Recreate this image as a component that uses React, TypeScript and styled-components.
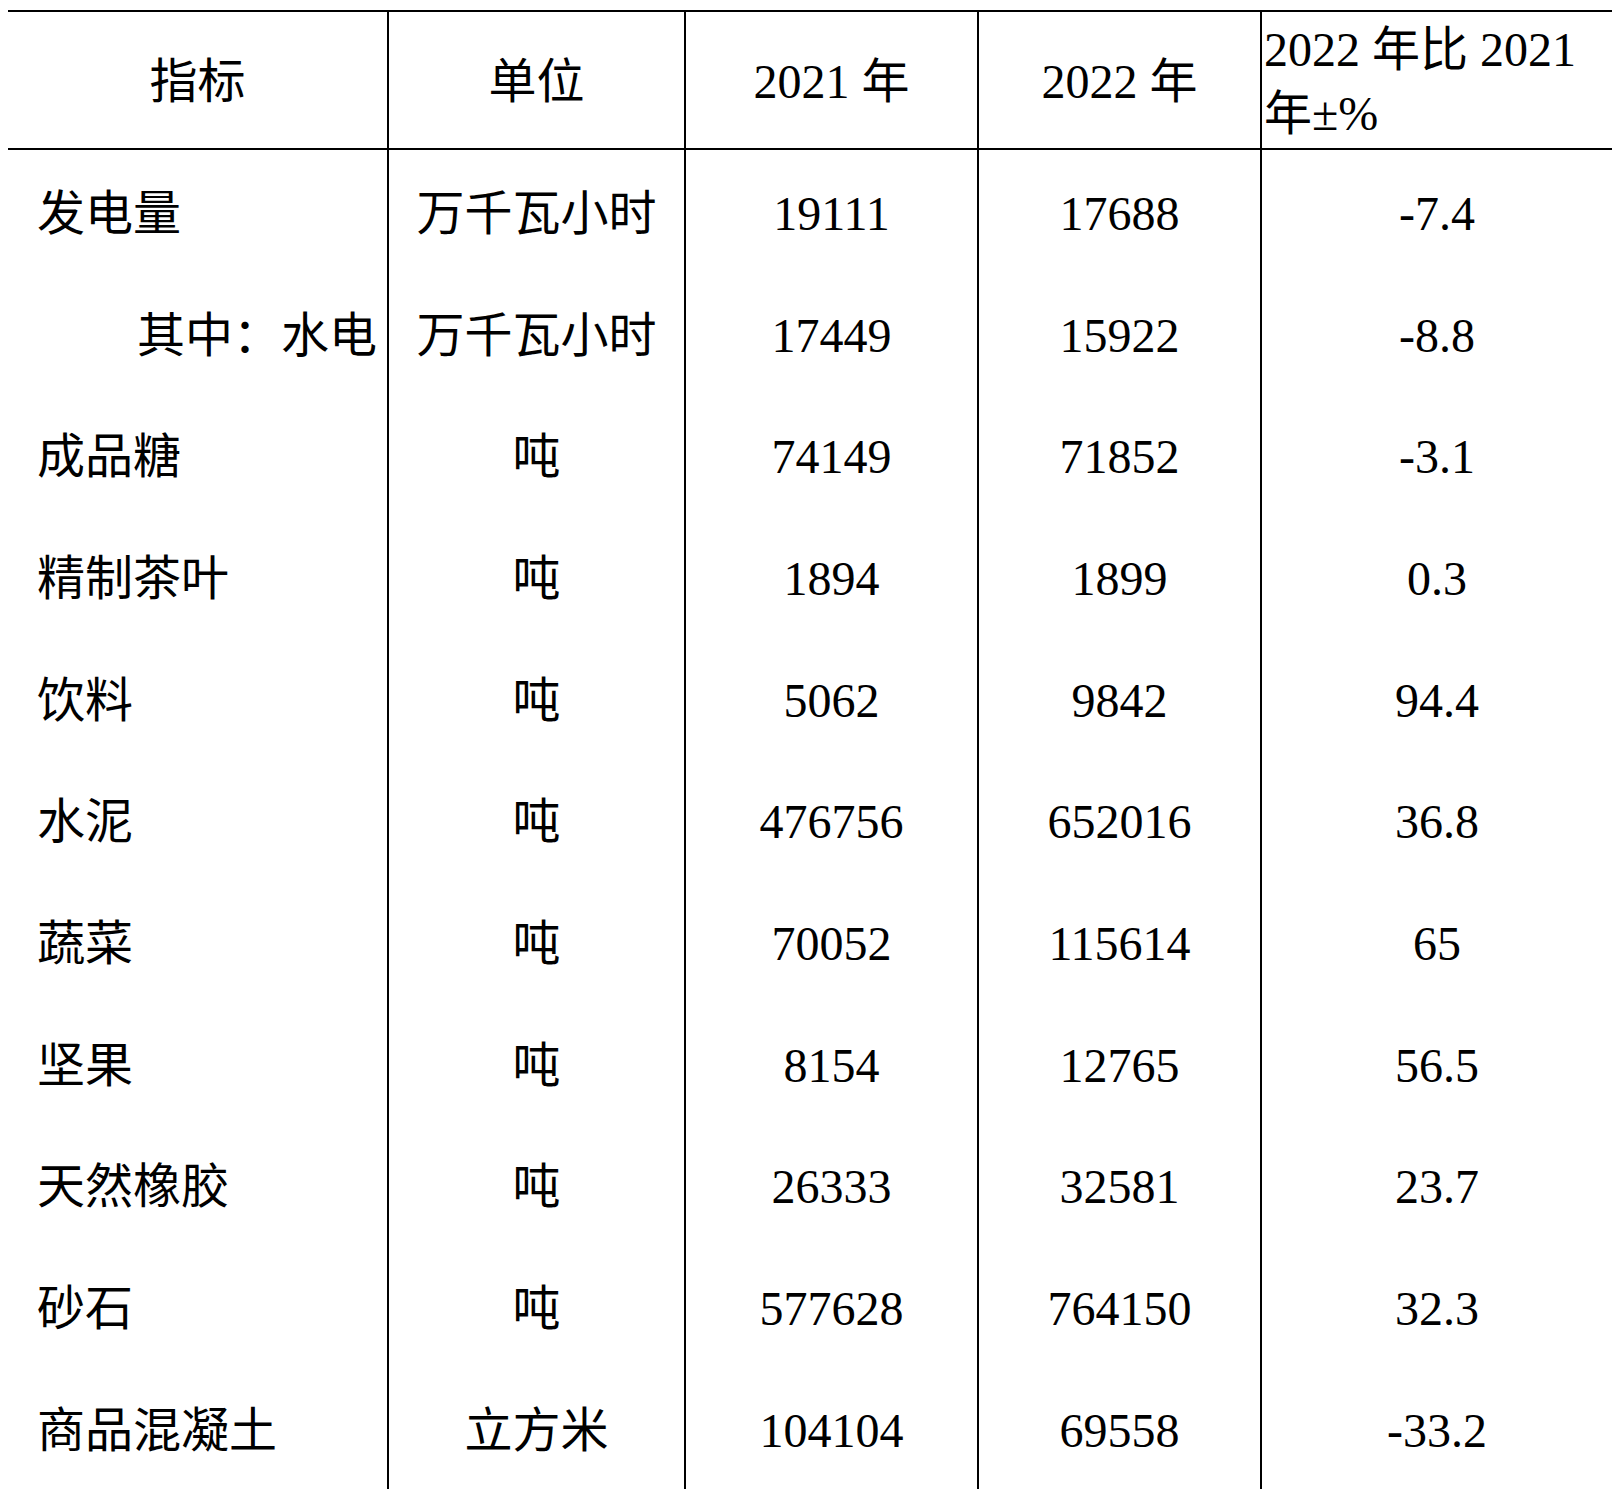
import React from 'react';
import styled, {createGlobalStyle} from 'styled-components'

export const GlobalStyles = createGlobalStyle`
body, html {
   margin: 0;
   padding: 0;
   background-color: #fff;
   color: #000;
   font-family: "Liberation Serif", "Noto Sans CJK SC", serif;
   overflow: hidden;
}
`

const Page = styled.div`
padding: 10px 0 0 8px;
width: 1604px;
`

const Table = styled.div`
display: grid;
grid-template-columns: 379px 297px 293px 283px 1fr;
grid-template-rows: 138px;
grid-auto-rows: 121.7px;
border-top: 2px solid #000;
font-size: 48px;
`

interface CellProps {
    $align?: 'left' | 'center';
    $first?: boolean;
    $head?: boolean;
    $indent?: number;
}

const Cell = styled.div<CellProps>`
display: flex;
align-items: center;
justify-content: ${props => props.$align === 'left' ? 'flex-start' : 'center'};
border-left: ${props => props.$first ? 'none' : '2px solid #000'};
border-bottom: ${props => props.$head ? '2px solid #000' : 'none'};
padding-left: ${props => props.$indent ?? 0}px;
padding-top: ${props => props.$head ? 4 : 6}px;
box-sizing: border-box;
white-space: nowrap;
line-height: 1;
`

const HeadWrap = styled.div`
display: flex;
align-items: center;
border-left: 2px solid #000;
border-bottom: 2px solid #000;
padding: 4px 0 0 2px;
box-sizing: border-box;
line-height: 64px;
`

type Row = [string, string, string, string, string, number?];

const rows: Row[] = [
    ['发电量', '万千瓦小时', '19111', '17688', '-7.4'],
    ['其中：水电', '万千瓦小时', '17449', '15922', '-8.8', 129],
    ['成品糖', '吨', '74149', '71852', '-3.1'],
    ['精制茶叶', '吨', '1894', '1899', '0.3'],
    ['饮料', '吨', '5062', '9842', '94.4'],
    ['水泥', '吨', '476756', '652016', '36.8'],
    ['蔬菜', '吨', '70052', '115614', '65'],
    ['坚果', '吨', '8154', '12765', '56.5'],
    ['天然橡胶', '吨', '26333', '32581', '23.7'],
    ['砂石', '吨', '577628', '764150', '32.3'],
    ['商品混凝土', '立方米', '104104', '69558', '-33.2'],
]

export default function App() {
  return (
  <Page>
    <GlobalStyles />
    <Table>
        <Cell $first $head>指标</Cell>
        <Cell $head>单位</Cell>
        <Cell $head>2021 年</Cell>
        <Cell $head>2022 年</Cell>
        <HeadWrap>
            <div>2022 年比 2021 年±%</div>
        </HeadWrap>
        {rows.map(([name, unit, a, b, pct, indent]) => (
            <React.Fragment key={name}>
                <Cell $first $align="left" $indent={indent ?? 29}>{name}</Cell>
                <Cell>{unit}</Cell>
                <Cell>{a}</Cell>
                <Cell>{b}</Cell>
                <Cell>{pct}</Cell>
            </React.Fragment>
        ))}
    </Table>
  </Page>
  );
}
